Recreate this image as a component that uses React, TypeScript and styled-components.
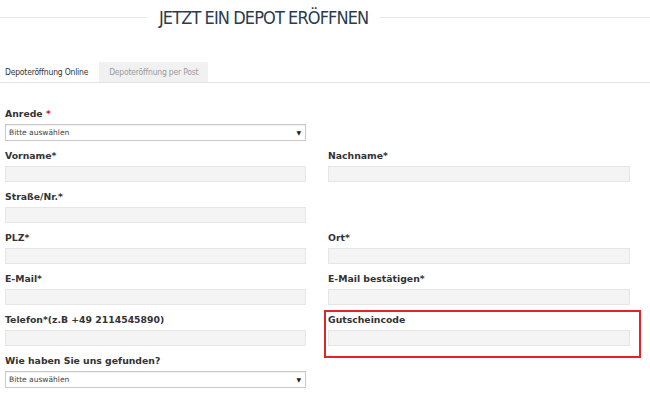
import styled, { createGlobalStyle } from "styled-components";

const GlobalStyle = createGlobalStyle`
  body {
    margin: 0;
    background: #fff;
    font-family: "DejaVu Sans", Verdana, sans-serif;
    color: #333;
  }
`

const Page = styled.div`
  width: 650px;
  height: 396px;
  overflow: hidden;
  padding-top: 6px;
  box-sizing: border-box;
`

const Header = styled.div`
  display: flex;
  align-items: center;
  gap: 12px;
  height: 22px;
`

const Line = styled.div<{ $width?: number }>`
  height: 1px;
  background: #e6e6e6;
  flex: ${p => (p.$width ? `0 0 ${p.$width}px` : "1")};
`

const Title = styled.h1`
  margin: 0;
  font-family: "DejaVu Sans Condensed", sans-serif;
  font-weight: normal;
  font-size: 18px;
  letter-spacing: -0.9px;
  color: #2c3b4c;
  white-space: nowrap;
`

const Tabs = styled.div`
  display: flex;
  margin-top: 34px;
  border-bottom: 1px solid #e3e3e3;
`

const Tab = styled.div<{ $active?: boolean }>`
  height: 20px;
  line-height: 20px;
  padding: ${p => (p.$active ? "0 11px 0 5px" : "0 10px")};
  font-family: "DejaVu Sans Condensed", sans-serif;
  font-size: 8.5px;
  letter-spacing: -0.2px;
  white-space: nowrap;
  color: ${p => (p.$active ? "#333" : "#999")};
  background: ${p => (p.$active ? "#fff" : "#f1f1f1")};
`

const Form = styled.form`
  display: flex;
  flex-direction: column;
  gap: 8px;
  padding: 24px 0 0 5px;
`

const Row = styled.div`
  display: grid;
  grid-template-columns: 301px 302px;
  column-gap: 22px;
`

const Field = styled.div<{ $highlight?: boolean }>`
  position: relative;
  display: flex;
  flex-direction: column;

  &::before {
    content: "";
    display: ${p => (p.$highlight ? "block" : "none")};
    position: absolute;
    top: -3px;
    left: -4px;
    right: -11px;
    bottom: -12px;
    border: 2px solid #e2232c;
  }
`

const Label = styled.label`
  font-size: 9.3px;
  font-weight: bold;
  line-height: 14px;
  margin-bottom: 3px;
  color: #333;
`

const Req = styled.span`
  color: #d0202a;
`

const Input = styled.div`
  height: 16px;
  box-sizing: border-box;
  background: #f4f4f4;
  border: 1px solid #e6e6e6;
`

const Select = styled.div`
  height: 17px;
  box-sizing: border-box;
  display: flex;
  align-items: center;
  justify-content: space-between;
  padding: 0 4px 0 3px;
  background: #fff;
  border: 1px solid #c9c9c9;
  box-shadow: inset 0 1px 1px rgba(0, 0, 0, 0.06);
  font-size: 7.5px;
  color: #444;
`

const Arrow = styled.span`
  font-size: 6px;
  color: #222;
`

function TextField({ label, highlight }: { label: string; highlight?: boolean }) {
  return (
    <Field $highlight={highlight}>
      <Label>{label}</Label>
      <Input />
    </Field>
  )
}

function SelectField({ label, required }: { label: string; required?: boolean }) {
  return (
    <Field>
      <Label>
        {label}
        {required && <Req> *</Req>}
      </Label>
      <Select>
        <span>Bitte auswählen</span>
        <Arrow>▼</Arrow>
      </Select>
    </Field>
  )
}

export default function App() {
  return (
    <>
      <GlobalStyle />
      <Page>
        <Header>
          <Line $width={147} />
          <Title>JETZT EIN DEPOT ERÖFFNEN</Title>
          <Line />
        </Header>
        <Tabs>
          <Tab $active>Depoteröffnung Online</Tab>
          <Tab>Depoteröffnung per Post</Tab>
        </Tabs>
        <Form>
          <Row>
            <SelectField label="Anrede" required />
          </Row>
          <Row>
            <TextField label="Vorname*" />
            <TextField label="Nachname*" />
          </Row>
          <Row>
            <TextField label="Straße/Nr.*" />
          </Row>
          <Row>
            <TextField label="PLZ*" />
            <TextField label="Ort*" />
          </Row>
          <Row>
            <TextField label="E-Mail*" />
            <TextField label="E-Mail bestätigen*" />
          </Row>
          <Row>
            <TextField label="Telefon*(z.B +49 2114545890)" />
            <TextField label="Gutscheincode" highlight />
          </Row>
          <Row>
            <SelectField label="Wie haben Sie uns gefunden?" />
          </Row>
        </Form>
      </Page>
    </>
  )
}
